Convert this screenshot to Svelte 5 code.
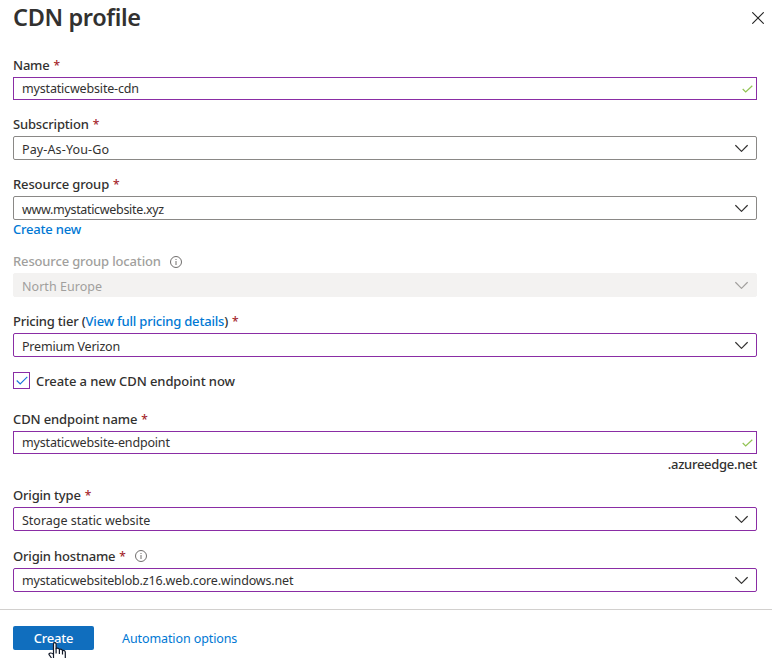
<script>
  const fields = [
    { id: 'name', label: 'Name', required: true, value: 'mystaticwebsite-cdn', kind: 'text', ls: -0.2, vs: -0.17, after: 12 },
    { id: 'sub', label: 'Subscription', required: true, value: 'Pay-As-You-Go', kind: 'plain', ls: -0.17, vs: 0.13, after: 12 },
    { id: 'rg', label: 'Resource group', required: true, value: 'www.mystaticwebsite.xyz', kind: 'plain', ls: -0.14, vs: -0.32, after: 11 },
    { id: 'loc', label: 'Resource group location', info: true, value: 'North Europe', kind: 'disabled', ls: -0.15, vs: 0.04, after: 12 },
    { id: 'tier', label: 'Pricing tier', link: 'View full pricing details', required: true, value: 'Premium Verizon', kind: 'edited', ls: -0.2, vs: -0.2, after: 15 },
    { id: 'endpoint', label: 'CDN endpoint name', required: true, value: 'mystaticwebsite-endpoint', kind: 'text', ls: -0.12, vs: -0.17, after: 9 },
    { id: 'type', label: 'Origin type', required: true, value: 'Storage static website', kind: 'edited', ls: -0.18, vs: -0.02, after: 13 },
    { id: 'host', label: 'Origin hostname', required: true, info: true, value: 'mystaticwebsiteblob.z16.web.core.windows.net', kind: 'edited', ls: -0.18, vs: -0.17, after: 17 }
  ];
</script>

<main class="panel">
  <header>
    <h1>CDN profile</h1>
    <svg class="close" width="12" height="12" viewBox="0 0 12 12"><path d="M.3.3l11.4 11.4M11.7.3L.3 11.7" /></svg>
  </header>
  <form>
    {#each fields as f (f.id)}
      <section class={f.kind} class:host={f.id === 'host'} style:margin-bottom="{f.after}px">
        <div class="label">
          <span style:letter-spacing="{f.ls}px">{f.label}{#if f.link}&nbsp;(<a href="#pricing">{f.link}</a>){/if}</span>
          {#if f.required}<span class="star">*</span>{/if}
          {#if f.info}
            <svg class="info" width="12" height="12" viewBox="0 0 12 12"><circle cx="6" cy="6" r="5.5" /><path d="M6 5v4M6 3v1" /></svg>
          {/if}
        </div>
        <div class="box">
          <span class="value" style:letter-spacing="{f.vs}px">{f.value}</span>
          {#if f.kind === 'text'}
            <svg class="valid" width="11" height="8" viewBox="0 0 11 8"><path d="M.7 4l3 3L10.3.7" /></svg>
          {:else}
            <svg class="chevron" width="13" height="8" viewBox="0 0 13 8"><path d="M.4 1.200l6.100 6.100L12.600 1.200" /></svg>
          {/if}
        </div>
        {#if f.id === 'rg'}<a class="new" href="#new">Create new</a>{/if}
        {#if f.id === 'endpoint'}<div class="suffix">.azureedge.net</div>{/if}
      </section>
      {#if f.id === 'tier'}
        <div class="check">
          <span class="tick"><svg width="12" height="9" viewBox="0 0 12 9"><path d="M.7 4.5l3.5 3.5L11.3.9" /></svg></span>
          <span class="checklabel">Create a new CDN endpoint now</span>
        </div>
      {/if}
    {/each}
  </form>
  <footer>
    <button>Create</button>
    <a class="auto" href="#automation">Automation options</a>
  </footer>
  <svg class="cursor" width="20" height="16" viewBox="0 0 20 16">
    <path d="M5.500 16V2.200Q5.500.7 6.800.7t1.300 1.500V6.500Q10.500 5.600 11.500 7.500 13.500 6.600 14.500 8.500 17.300 8.200 17.300 10.500V16M5.500 12.500C3.800 10.200.7 10.800 1 12.500L3.500 16" />
    <path d="M8.100 6.500V11.500M11.400 7.500V12M14.500 8.500V12.500" />
  </svg>
</main>

<style>
  .panel { position: relative; width: 772px; height: 658px; overflow: hidden; background: #fff; color: #323130; font: 500 13px/24px "Noto Sans", "Open Sans", sans-serif; }
  header { height: 53px; padding: 5px 8px 0 13px; display: flex; justify-content: space-between; align-items: flex-start; box-sizing: border-box; }
  h1 { margin: 0; font-size: 23.5px; font-weight: 600; line-height: 24px; letter-spacing: -.36px; }
  svg { flex: none; fill: none; }
  .close { margin-top: 7px; stroke: #222; stroke-width: 1.1; }
  form { padding: 0 15px 0 13px; }
  .label { height: 24px; display: flex; align-items: center; white-space: nowrap; }
  a { color: #0078d4; text-decoration: none; letter-spacing: -.2px; }
  .star { color: #a4262c; margin: 2px 0 0 4px; width: 6px; font-size: 12px; }
  .info { margin: 1px 0 0 9px; stroke: #605e5c; stroke-width: .9; }
  .host .info { margin: 0 0 0 10px; }
  .box { height: 24px; box-sizing: border-box; border: 1px solid #8a8886; border-radius: 2px; padding: 0 8px; display: flex; align-items: center; justify-content: space-between; font-size: 12.5px; font-weight: 400; }
  .value { line-height: 20px; margin-top: 4px; white-space: nowrap; }
  .host .value { margin-top: 2px; }
  .text .box { height: 23px; border-color: #8a2da5; border-radius: 0; padding: 0 3px 0 8px; }
  .text .value { margin-top: 1px; }
  .edited .box { border-color: #8a2da5; }
  .disabled .box { background: #f3f2f1; border-color: #f3f2f1; color: #a19f9d; }
  .disabled .label { color: #a19f9d; }
  .chevron { stroke: #323130; stroke-width: 1.2; }
  .disabled .chevron { stroke: #a19f9d; }
  .valid { margin-top: 1px; stroke: #92c353; stroke-width: 1.2; }
  .new { display: block; height: 18px; line-height: 18px; }
  .suffix { height: 20px; line-height: 20px; text-align: right; letter-spacing: -.28px; }
  .check { height: 17px; display: flex; align-items: center; margin-bottom: 18px; letter-spacing: -.09px; }
  .tick { width: 17px; height: 17px; box-sizing: border-box; border: 1px solid #8a2da5; display: flex; align-items: center; justify-content: center; margin-right: 6px; }
  .tick svg { stroke: #1a73d9; stroke-width: 1.1; }
  footer { border-top: 1px solid #d2d0ce; padding: 16px 13px 0; display: flex; align-items: center; }
  button { width: 81px; height: 24px; border: 0; border-radius: 2px; padding: 0; background: #106ebe; color: #fff; font: inherit; letter-spacing: -.2px; }
  .auto { margin: 1px 0 -1px 28px; font-weight: 400; font-size: 12.5px; letter-spacing: -.1px; }
  .cursor { position: absolute; left: 48px; top: 642px; fill: #fff; stroke: #111827; stroke-width: 1.2; }
</style>
